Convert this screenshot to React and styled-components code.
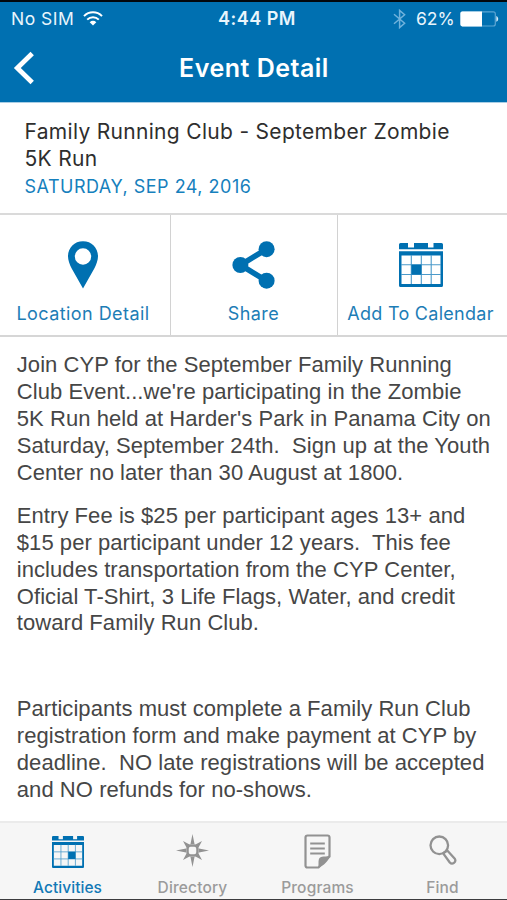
import React from "react";
import styled, { createGlobalStyle } from "styled-components";

const BLUE = "#0070b1";
const GREY = "#929292";

const GlobalStyle = createGlobalStyle`
  * { box-sizing: border-box; }
  body { margin: 0; background: #fff; }
  button { font: inherit; color: inherit; background: none; border: 0; padding: 0; margin: 0; }
  svg { display: block; flex: none; }
`;

const Screen = styled.div`
  width: 507px;
  height: 900px;
  display: flex;
  flex-direction: column;
  overflow: hidden;
  background: #fff;
  border-top: 2px solid #02070c;
  border-bottom: 1px solid #3c3c3e;
  font-family: Inter, "Liberation Sans", sans-serif;
`;

const Header = styled.header`
  flex: none;
  height: 101px;
  background: ${BLUE};
  border-bottom: 1px solid #a9cee5;
  color: #fff;
`;

const StatusBar = styled.div`
  height: 33px;
  display: grid;
  grid-template-columns: 1fr auto 1fr;
  align-items: center;
  padding: 0 8px 0 11px;
  font-size: 17.5px;
  line-height: 33px;
  color: #e9f5fc;
`;

const StatusGroup = styled.div`
  display: flex;
  align-items: center;
  justify-content: ${(p) => (p.$end ? "flex-end" : "flex-start")};
  gap: ${(p) => p.$gap}px;
`;

const Carrier = styled.span`
  letter-spacing: 0.5px;
`;

const Clock = styled.span`
  padding-left: 4px;
  font-size: 18px;
  font-weight: 600;
  letter-spacing: 0.5px;
`;

const Percent = styled.span`
  margin-left: 5px;
  letter-spacing: -0.1px;
`;

const NavBar = styled.div`
  height: 66px;
  display: grid;
  grid-template-columns: 60px 1fr 60px;
  align-items: center;
`;

const BackButton = styled.button`
  padding-left: 13px;
`;

const NavTitle = styled.h1`
  margin: 0;
  padding-left: 1px;
  text-align: center;
  font-size: 25px;
  line-height: 66px;
  font-weight: 600;
  letter-spacing: 0.5px;
`;

const Summary = styled.section`
  flex: none;
  height: 110px;
  padding: 16px 24.5px 0;
`;

const EventName = styled.h2`
  margin: 0;
  font-size: 21px;
  line-height: 26.5px;
  font-weight: 400;
  letter-spacing: 0.31px;
  color: #2e2e2e;
`;

const EventDate = styled.div`
  font-size: 18px;
  line-height: 30px;
  letter-spacing: 0.49px;
  color: #1680bd;
`;

const Actions = styled.div`
  flex: none;
  height: 124px;
  display: grid;
  grid-template-columns: 171px 167px 169px;
  border-top: 2px solid #dadada;
  border-bottom: 2px solid #d6d6d6;
`;

const Action = styled.button`
  display: flex;
  flex-direction: column;
  align-items: center;
  padding: 26px ${(p) => p.$inset}px 0 0;
  color: ${BLUE};

  &:not(:last-child) { border-right: 1px solid #d2d2d2; }
`;

const IconSlot = styled.span`
  height: ${(p) => p.$height}px;
  padding-top: ${(p) => p.$drop || 0}px;
  display: flex;
  align-items: flex-start;
  justify-content: center;
`;

const ActionLabel = styled.span`
  font-size: 18px;
  line-height: 24px;
  letter-spacing: ${(p) => p.$tracking}px;
  color: #1d7db6;
  white-space: nowrap;
`;

const Description = styled.main`
  flex: 1;
  min-height: 0;
  padding: 15.3px 0 0 16.8px;
  font-family: "Liberation Sans", Arial, sans-serif;
  font-size: 22px;
  line-height: 26.9px;
  letter-spacing: 0.06px;
  color: #464646;
`;

const Paragraph = styled.p`
  margin: 0 0 16px;
  white-space: pre;
`;

const TabBar = styled.nav`
  flex: none;
  height: 78px;
  display: grid;
  grid-template-columns: repeat(4, 125px);
  padding-left: 5px;
  background: #f6f6f6;
  border-top: 2px solid #ebebeb;
`;

const Tab = styled.button`
  display: flex;
  flex-direction: column;
  align-items: center;
  padding-top: 11px;
  color: ${(p) => (p.$active ? BLUE : GREY)};
`;

const TabLabel = styled.span`
  font-size: 15.5px;
  line-height: 20px;
  font-weight: 500;
  letter-spacing: ${(p) => p.$tracking}px;
  color: ${(p) => (p.$active ? "#1279b6" : "#9b9b9b")};
`;

const WifiIcon = () => (
  <svg width="20" height="15" viewBox="0 0 20 15" fill="none" stroke="#fff" strokeWidth="2">
    <path d="M1 5.1C6 .1 14 .1 19 5.1" />
    <path d="M4.2 8.6c3.3-3.3 8.3-3.3 11.6 0" />
    <path d="M10 14.6 6.7 11.2c1.9-1.8 4.7-1.8 6.6 0Z" fill="#fff" stroke="none" />
  </svg>
);

const BluetoothIcon = () => (
  <svg width="13" height="20" viewBox="0 0 13 20" fill="none" stroke="#6fb2dc" strokeWidth="1.5">
    <path d="m1 5.3 10.6 9L6.6 18.6V1.4l5 4.3L1 14.7" />
  </svg>
);

const BatteryIcon = () => (
  <svg width="39" height="16" viewBox="0 0 39 16">
    <rect x=".8" y=".8" width="34.5" height="14.2" rx="2" fill="none" stroke="#5ba5d3" strokeWidth="1.2" />
    <path d="M2.2.4H22v15H2.2A1.8 1.8 0 0 1 .4 13.6V2.2A1.8 1.8 0 0 1 2.2.4Z" fill="#fff" />
    <path d="M36.3 5c2.5.8 2.5 5 0 5.8Z" fill="#d5eaf7" />
  </svg>
);

const BackIcon = () => (
  <svg width="24" height="34" viewBox="0 0 24 34" fill="none" stroke="#fff" strokeWidth="4.8">
    <path d="M19.2 2.5 4.3 17l14.9 14.5" />
  </svg>
);

const PinIcon = () => (
  <svg width="32" height="48" viewBox="0 0 32 48" fill={BLUE}>
    <path
      fillRule="evenodd"
      d="M16 .3C7.3.3 1 6.8 1 15.3c0 4 1.6 8.2 3.7 12.2L16 47.6l11.3-20.1c2.1-4 3.7-8.200 3.700-12.200C31 6.800 24.700.3 16 .3Zm0 7a8.200 8.200 0 1 1 0 16.400 8.200 8.200 0 0 1 0-16.400Z"
    />
  </svg>
);

const ShareIcon = () => (
  <svg width="43" height="48" viewBox="0 0 43 48" fill={BLUE}>
    <path d="M34.5 8.2 8.5 24l26 15.8" fill="none" stroke={BLUE} strokeWidth="5.6" />
    <circle cx="34.6" cy="8.2" r="8" />
    <circle cx="8.4" cy="24" r="8" />
    <circle cx="34.6" cy="39.7" r="8" />
  </svg>
);

const CalendarIcon = ({ size, markedColumn }) => (
  <svg width={size} height={size} viewBox="0 0 44 44" fill={BLUE}>
    <path d="M1.5 0H9v4.500h6V0h14v4.500h5.500V0h8q1.500 0 1.500 1.500v4.800H0V1.500Q0 0 1.500 0Z" />
    <path
      fillRule="evenodd"
      d="M0 8.300h44v34.200q0 1.500-1.500 1.500h-41Q0 44 0 42.500ZM2.500 12.500V41h39V12.500Z"
    />
    <path
      d="M12.300 12v29M22.300 12v29M32.200 12v29M2 21.800h40M2 31.500h40"
      fill="none"
      stroke="#4b9aca"
      strokeWidth="1.1"
    />
    <rect x={2.5 + markedColumn * 9.9} y="21.6" width="10" height="10" />
  </svg>
);

const CompassIcon = () => (
  <svg width="33" height="33" viewBox="0 0 33 33" fill={GREY}>
    <path d="m16.500 0 2 10h-4Zm0 33 2-10h-4ZM0 16.500l10-2v4Zm33 0-10-2v4Z" />
    <path d="m7 7 6.500 3.500-3 3Zm19 0-3.500 6.500-3-3ZM7 26l3.500-6.500 3 3Zm19 0-6.500-3.500 3-3Z" />
    <rect x="11.500" y="11.500" width="10" height="10" rx="3.200" fill="#f6f6f6" stroke={GREY} strokeWidth="2.500" />
  </svg>
);

const DocumentIcon = () => (
  <svg width="27" height="35" viewBox="0 0 27 35" fill="none" stroke={GREY} strokeWidth="2.2">
    <path d="M14.500 33.500H3.500q-2 0-2-2V3.500q0-2 2-2h20q2 0 2 2v19Z" />
    <path d="M14 34c1-2 .1-6 .8-8.500.7-2.300 2.800-3 5.200-2.900 2.200.1 4.400-.6 6-1.600-.8 5.300-6.500 11-12 13Z" fill={GREY} stroke="none" />
    <path d="M6.200 9.500h14.600M6.200 14.500h14.600M6.200 19.500h14.600" />
  </svg>
);

const SearchIcon = () => (
  <svg width="28" height="31" viewBox="0 0 28 31" fill="none" stroke={GREY} strokeWidth="2.3">
    <circle cx="10.300" cy="10.300" r="8.800" />
    <path d="m14.200 18.300 6.600 9.200q1.900 2.100 4.200.4 2.200-1.700.8-4.200L18.300 15.500Z" strokeLinejoin="round" />
  </svg>
);

const actions = [
  { label: "Location Detail", tracking: 0.44, inset: 4, icon: <PinIcon /> },
  { label: "Share", tracking: 0.42, inset: 1, icon: <ShareIcon /> },
  { label: "Add To Calendar", tracking: 0.28, inset: 4, drop: 1.5, icon: <CalendarIcon size={44} markedColumn={1} /> },
];

const tabs = [
  { label: "Activities", tracking: 0.06, active: true, drop: 1.5, icon: <CalendarIcon size={32} markedColumn={2} /> },
  { label: "Directory", tracking: 0.15, icon: <CompassIcon /> },
  { label: "Programs", tracking: 0.15, icon: <DocumentIcon /> },
  { label: "Find", tracking: 0.15, drop: 1, icon: <SearchIcon /> },
];

const paragraphs = [
  `Join CYP for the September Family Running
Club Event...we're participating in the Zombie
5K Run held at Harder's Park in Panama City on
Saturday, September 24th.  Sign up at the Youth
Center no later than 30 August at 1800.`,
  `Entry Fee is $25 per participant ages 13+ and
$15 per participant under 12 years.  This fee
includes transportation from the CYP Center,
Oficial T-Shirt, 3 Life Flags, Water, and credit
toward Family Run Club.`,
  "\u00a0",
  `Participants must complete a Family Run Club
registration form and make payment at CYP by
deadline.  NO late registrations will be accepted
and NO refunds for no-shows.`,
];

export default function App() {
  return (
    <Screen>
      <GlobalStyle />
      <Header>
        <StatusBar>
          <StatusGroup $gap={9}>
            <Carrier>No SIM</Carrier>
            <WifiIcon />
          </StatusGroup>
          <Clock>4:44 PM</Clock>
          <StatusGroup $gap={5.5} $end>
            <BluetoothIcon />
            <Percent>62%</Percent>
            <BatteryIcon />
          </StatusGroup>
        </StatusBar>
        <NavBar>
          <BackButton aria-label="Back">
            <BackIcon />
          </BackButton>
          <NavTitle>Event Detail</NavTitle>
        </NavBar>
      </Header>
      <Summary>
        <EventName>Family Running Club - September Zombie 5K Run</EventName>
        <EventDate>SATURDAY, SEP 24, 2016</EventDate>
      </Summary>
      <Actions>
        {actions.map((a) => (
          <Action key={a.label} $inset={a.inset}>
            <IconSlot $height={61} $drop={a.drop}>{a.icon}</IconSlot>
            <ActionLabel $tracking={a.tracking}>{a.label}</ActionLabel>
          </Action>
        ))}
      </Actions>
      <Description>
        {paragraphs.map((text, i) => (
          <Paragraph key={i}>{text}</Paragraph>
        ))}
      </Description>
      <TabBar>
        {tabs.map((t) => (
          <Tab key={t.label} $active={t.active}>
            <IconSlot $height={44} $drop={t.drop}>{t.icon}</IconSlot>
            <TabLabel $active={t.active} $tracking={t.tracking}>{t.label}</TabLabel>
          </Tab>
        ))}
      </TabBar>
    </Screen>
  );
}
